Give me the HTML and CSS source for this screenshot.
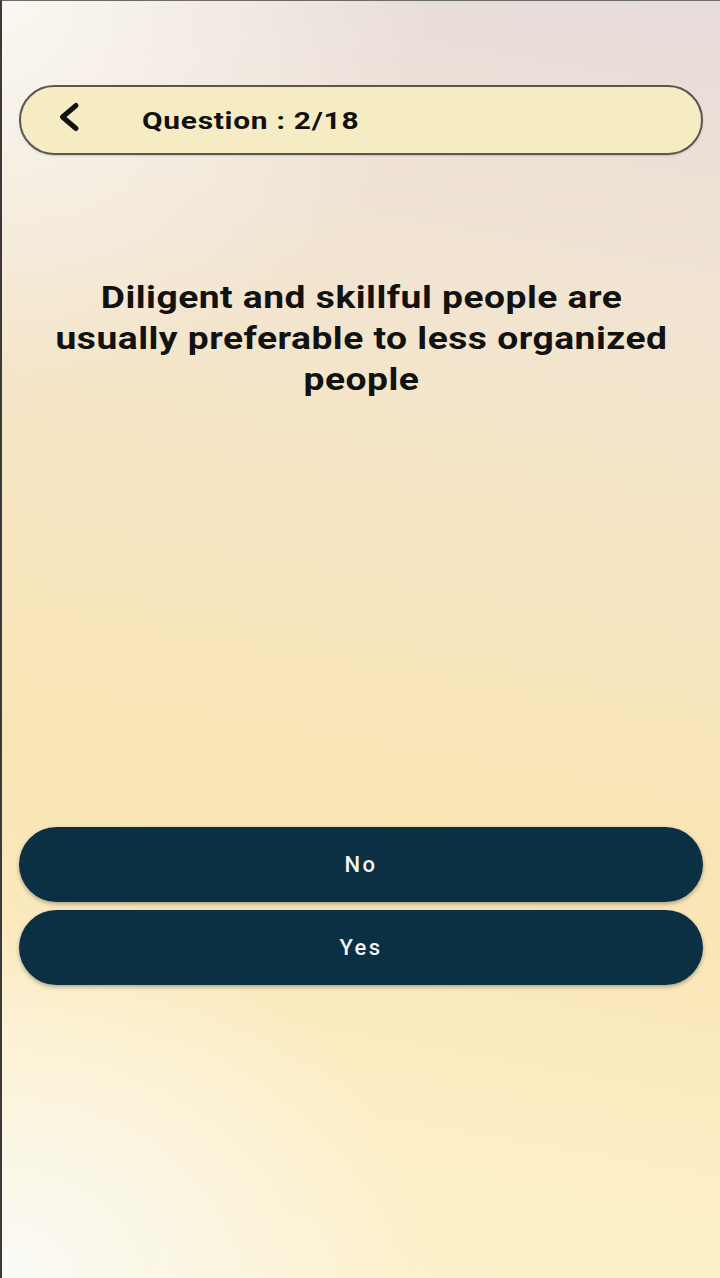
FILE: index.html
```html
<!DOCTYPE html>
<html lang="en">
<head>
<meta charset="utf-8">
<title>Question</title>
<link rel="stylesheet" href="styles.css">
</head>
<body>
<div class="screen">
  <header class="topbar">
    <span class="back" aria-label="Back">
      <svg width="24" height="32" viewBox="0 0 24 32"><path d="M19 4.5 L5.5 16 L19 27.5" fill="none" stroke="#111" stroke-width="5" stroke-linecap="round" stroke-linejoin="round"/></svg>
    </span>
    <span class="title">Question : 2/18</span>
  </header>
  <h1 class="question">Diligent and skillful people are usually preferable to less organized people</h1>
  <div class="spacer"></div>
  <div class="answers">
    <button class="answer">No</button>
    <button class="answer">Yes</button>
  </div>
</div>
</body>
</html>
```
FILE: styles.css
```css
html, body {
  margin: 0;
  padding: 0;
  height: 100%;
}
body {
  font-family: Roboto, "Noto Sans", sans-serif;
}
.screen {
  box-sizing: border-box;
  width: 720px;
  height: 1278px;
  display: flex;
  flex-direction: column;
  border-left: 2px solid #3a3a3a;
  border-top: 1px solid #6a6a6a;
  background:
    radial-gradient(ellipse 60% 30% at 0% 0%, rgba(252,250,244,0.9), rgba(252,250,244,0) 100%),
    radial-gradient(ellipse 60% 28% at 0% 100%, rgba(250,250,246,1), rgba(250,250,246,0) 100%),
    linear-gradient(190deg, #e7dbdb 0%, #f1e4d2 22%, #f6e6c4 40%, #f9e4b4 62%, #fcedc4 82%, #fdf1cc 100%);
  padding: 84px 17px 0 17px;
}
.topbar {
  box-sizing: border-box;
  height: 70px;
  border: 2px solid #5a5650;
  border-radius: 35px;
  background: #f6ecc3;
  display: flex;
  align-items: center;
  padding-left: 36px;
  box-shadow: 0 1px 2px rgba(0,0,0,0.15);
}
.back {
  display: flex;
  width: 24px;
  height: 32px;
  margin-top: -6px;
}
.title {
  display: inline-block;
  margin-left: 61px;
  font-size: 24.5px;
  font-weight: 700;
  color: #111;
  letter-spacing: 0.6px;
  transform: scaleX(1.22);
  transform-origin: left center;
}
.question {
  margin: 122px auto 0 auto;
  width: 515px;
  font-size: 30.5px;
  line-height: 41px;
  font-weight: 700;
  text-align: center;
  color: #121212;
  letter-spacing: 0.4px;
  padding: 0;
  transform: scaleX(1.22);
  transform-origin: center top;
}
.spacer {
  flex: 1;
}
.answers {
  display: flex;
  flex-direction: column;
  gap: 8px;
  margin-bottom: 293px;
}
.answer {
  height: 75px;
  border: none;
  border-radius: 38px;
  background: #0b3044;
  color: #f4f4f4;
  font-family: Roboto, "Noto Sans", sans-serif;
  font-size: 22px;
  font-weight: 500;
  letter-spacing: 2.4px;
  box-shadow: 0 2px 4px rgba(0,0,0,0.3);
}
```
